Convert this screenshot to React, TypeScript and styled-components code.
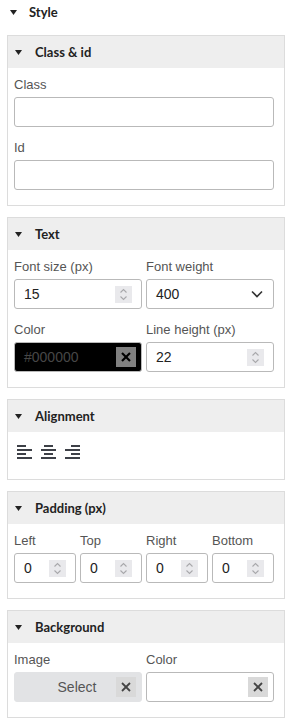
import styled, { createGlobalStyle } from "styled-components";

const GlobalStyle = createGlobalStyle`
  body {
    margin: 0;
    background: #fff;
    font-family: "Liberation Sans", Arial, sans-serif;
  }
  * { box-sizing: border-box; }
`;

const Sidebar = styled.div`
  width: 291px;
  padding: 0 6px 8px 7px;
  display: flex;
  flex-direction: column;
  gap: 11px;
`;

const Title = styled.div`
  height: 24px;
  display: flex;
  align-items: center;
  gap: 12px;
  padding-left: 3px;
  font-family: Lato, "Open Sans", sans-serif;
  font-weight: 700;
  font-size: 13px;
  color: #222;
`;

const Panel = styled.section`
  border: 1px solid #dcdcdc;
  background: #fff;
`;

const PanelHeader = styled.div`
  height: 32px;
  background: #eeeeee;
  display: flex;
  align-items: center;
  gap: 13px;
  padding-left: 7px;
  font-family: Lato, "Open Sans", sans-serif;
  font-weight: 700;
  font-size: 13px;
  color: #222;
`;

const PanelBody = styled.div<{ $cols?: number }>`
  padding: 8px 10px 15px 6px;
  display: grid;
  grid-template-columns: repeat(${(p) => p.$cols ?? 1}, 1fr);
  column-gap: 4px;
  row-gap: 12px;
`;

const Field = styled.label`
  display: flex;
  flex-direction: column;
  gap: 3px;
  min-width: 0;
`;

const Label = styled.span`
  font-size: 13px;
  line-height: 18px;
  color: #555;
`;

const InputBox = styled.div<{ $dark?: boolean; $muted?: boolean }>`
  height: 30px;
  display: flex;
  align-items: center;
  justify-content: space-between;
  padding: 0 5px 0 9px;
  border: 1px solid ${(p) => (p.$muted ? "#e2e3e5" : "#b9b9b9")};
  border-radius: 3px;
  background: ${(p) => (p.$dark ? "#000" : p.$muted ? "#e2e3e5" : "#fff")};
  font-size: 14px;
  color: ${(p) => (p.$dark ? "#474747" : "#222")};
`;

const SelectText = styled.span`
  flex: 1;
  text-align: center;
  padding-left: 14px;
  color: #555;
`;

const Spin = styled.span`
  width: 17px;
  height: 17px;
  margin-right: 4px;
  background: #e9e9ec;
  display: flex;
  align-items: center;
  justify-content: center;
`;

const Clear = styled.span<{ $dark?: boolean }>`
  width: 20px;
  height: 20px;
  background: ${(p) => (p.$dark ? "#808080" : "#d9d9d9")};
  display: flex;
  align-items: center;
  justify-content: center;
`;

const AlignRow = styled.div`
  display: flex;
  gap: 9px;
  padding: 4px 0 5px 3px;
`;

const AlignButton = styled.span`
  width: 15px;
  height: 15px;
  display: flex;
  color: #3d4047;
`;

function Caret() {
  return (
    <svg width="7" height="5" viewBox="0 0 7 5">
      <polygon points="0,0 7,0 3.5,5" fill="#222" />
    </svg>
  );
}

function Spinner() {
  return (
    <Spin>
      <svg width="9" height="13" viewBox="0 0 9 13" fill="none" stroke="#a8a8ab" strokeWidth="1.1">
        <polyline points="1.5,4.5 4.5,1.5 7.5,4.5" />
        <polyline points="1.5,8.5 4.5,11.5 7.5,8.5" />
      </svg>
    </Spin>
  );
}

function ClearButton({ dark }: { dark?: boolean }) {
  return (
    <Clear $dark={dark}>
      <svg width="10" height="10" viewBox="0 0 10 10" stroke={dark ? "#000" : "#444"} strokeWidth={dark ? 2.2 : 1.8}>
        <line x1="1" y1="1" x2="9" y2="9" />
        <line x1="9" y1="1" x2="1" y2="9" />
      </svg>
    </Clear>
  );
}

function Chevron() {
  return (
    <svg width="12" height="8" viewBox="0 0 12 8" fill="none" stroke="#333" strokeWidth="1.6" style={{ marginRight: 5 }}>
      <polyline points="1,1.5 6,6.5 11,1.5" />
    </svg>
  );
}

function AlignIcon({ align }: { align: "left" | "center" | "right" }) {
  const rows = [9, 15, 9, 15];
  return (
    <AlignButton>
      <svg width="15" height="15" viewBox="0 0 15 15">
        {rows.map((w, i) => {
          const x = align === "left" ? 0 : align === "right" ? 15 - w : (15 - w) / 2;
          return <rect key={i} x={x} y={1 + i * 4} width={w} height="2" fill="currentColor" />;
        })}
      </svg>
    </AlignButton>
  );
}

function NumberInput({ value }: { value: string }) {
  return (
    <InputBox>
      <span>{value}</span>
      <Spinner />
    </InputBox>
  );
}

function Section({ title, children }: { title: string; children: React.ReactNode }) {
  return (
    <Panel>
      <PanelHeader>
        <Caret />
        {title}
      </PanelHeader>
      {children}
    </Panel>
  );
}

export default function App() {
  return (
    <>
      <GlobalStyle />
      <Sidebar>
        <Title>
          <Caret />
          Style
        </Title>

        <Section title="Class & id">
          <PanelBody>
            <Field>
              <Label>Class</Label>
              <InputBox />
            </Field>
            <Field>
              <Label>Id</Label>
              <InputBox />
            </Field>
          </PanelBody>
        </Section>

        <Section title="Text">
          <PanelBody $cols={2}>
            <Field>
              <Label>Font size (px)</Label>
              <NumberInput value="15" />
            </Field>
            <Field>
              <Label>Font weight</Label>
              <InputBox>
                <span>400</span>
                <Chevron />
              </InputBox>
            </Field>
            <Field>
              <Label>Color</Label>
              <InputBox $dark>
                <span>#000000</span>
                <ClearButton dark />
              </InputBox>
            </Field>
            <Field>
              <Label>Line height (px)</Label>
              <NumberInput value="22" />
            </Field>
          </PanelBody>
        </Section>

        <Section title="Alignment">
          <PanelBody>
            <AlignRow>
              <AlignIcon align="left" />
              <AlignIcon align="center" />
              <AlignIcon align="right" />
            </AlignRow>
          </PanelBody>
        </Section>

        <Section title="Padding (px)">
          <PanelBody $cols={4}>
            {["Left", "Top", "Right", "Bottom"].map((side) => (
              <Field key={side}>
                <Label>{side}</Label>
                <NumberInput value="0" />
              </Field>
            ))}
          </PanelBody>
        </Section>

        <Section title="Background">
          <PanelBody $cols={2}>
            <Field>
              <Label>Image</Label>
              <InputBox $muted>
                <SelectText>Select</SelectText>
                <ClearButton />
              </InputBox>
            </Field>
            <Field>
              <Label>Color</Label>
              <InputBox>
                <span />
                <ClearButton />
              </InputBox>
            </Field>
          </PanelBody>
        </Section>
      </Sidebar>
    </>
  );
}
